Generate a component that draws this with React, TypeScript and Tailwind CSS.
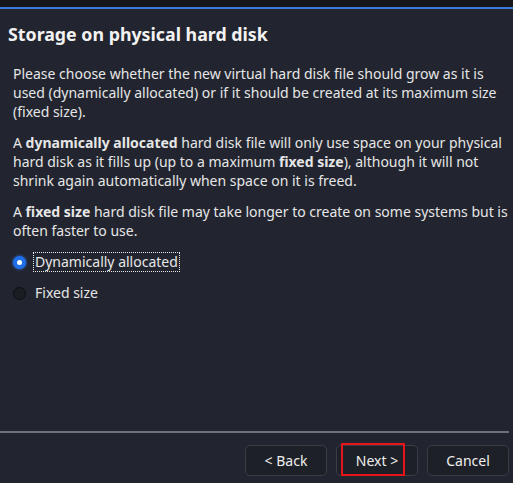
import React from "react";

function Radio({ checked, label, focused }: { checked?: boolean; label: string; focused?: boolean }) {
  return (
    <label className="flex h-[24px] items-center">
      {checked ? (
        <span className="flex h-[13px] w-[13px] items-center justify-center rounded-full bg-[#1f6fe8] shadow-[0_0_3px_#2a7bff]">
          <span className="h-[5px] w-[5px] rounded-full bg-white" />
        </span>
      ) : (
        <span className="h-[13px] w-[13px] rounded-full border border-[#0c0d10] bg-[#1b1d24]" />
      )}
      <span
        className={
          focused
            ? "ml-[7px] border border-dotted border-[#e8e8e8] px-px leading-[18px]"
            : "ml-[8px] px-px leading-[18px]"
        }
      >
        {label}
      </span>
    </label>
  );
}

function Button({ children, marked }: { children: React.ReactNode; marked?: boolean }) {
  return (
    <button className="relative flex h-[31px] w-[82px] items-center justify-center rounded-[5px] border border-[#3a3d46] bg-[#1e2028] text-[14px] text-[#eeeeee]">
      {marked && <span className="absolute left-[4px] top-[-3px] h-[33px] w-[64px] border-2 border-[#e8141c]" />}
      {children}
    </button>
  );
}

export default function App() {
  return (
    <div
      className="flex h-[483px] w-[513px] flex-col bg-[#22252f] text-[#e6e6e6]"
      style={{ fontFamily: '"Noto Sans", "Open Sans", sans-serif' }}
    >
      <div className="h-[7px] bg-[#16171b]" />
      <div className="h-[2px] bg-[#3c7bdc]" />
      <h1 className="mt-[13px] pl-[8px] text-[17.8px] font-bold leading-[24px] text-[#f2f2f2]">
        Storage on physical hard disk
      </h1>
      <div className="mt-[18px] pl-[13px] pr-[4px] text-[14px] leading-[19px] whitespace-nowrap">
        <p>
          Please choose whether the new virtual hard disk file should grow as it is
          <br />
          used (dynamically allocated) or if it should be created at its maximum size
          <br />
          (fixed size).
        </p>
        <p className="mt-[12px]">
          A <b>dynamically allocated</b> hard disk file will only use space on your physical
          <br />
          hard disk as it fills up (up to a maximum <b>fixed size</b>), although it will not
          <br />
          shrink again automatically when space on it is freed.
        </p>
        <p className="mt-[12px]">
          A <b>fixed size</b> hard disk file may take longer to create on some systems but is
          <br />
          often faster to use.
        </p>
        <div className="mt-[10px] flex flex-col gap-[7px]">
          <Radio checked focused label="Dynamically allocated" />
          <Radio label="Fixed size" />
        </div>
      </div>
      <div className="flex-1" />
      <div className="mr-[4px] h-[2px] bg-[#6e7178]" />
      <div className="flex justify-end gap-[9px] pb-[7px] pr-[4px] pt-[12px]">
        <Button>&lt; Back</Button>
        <Button marked>Next &gt;</Button>
        <Button>Cancel</Button>
      </div>
    </div>
  );
}
